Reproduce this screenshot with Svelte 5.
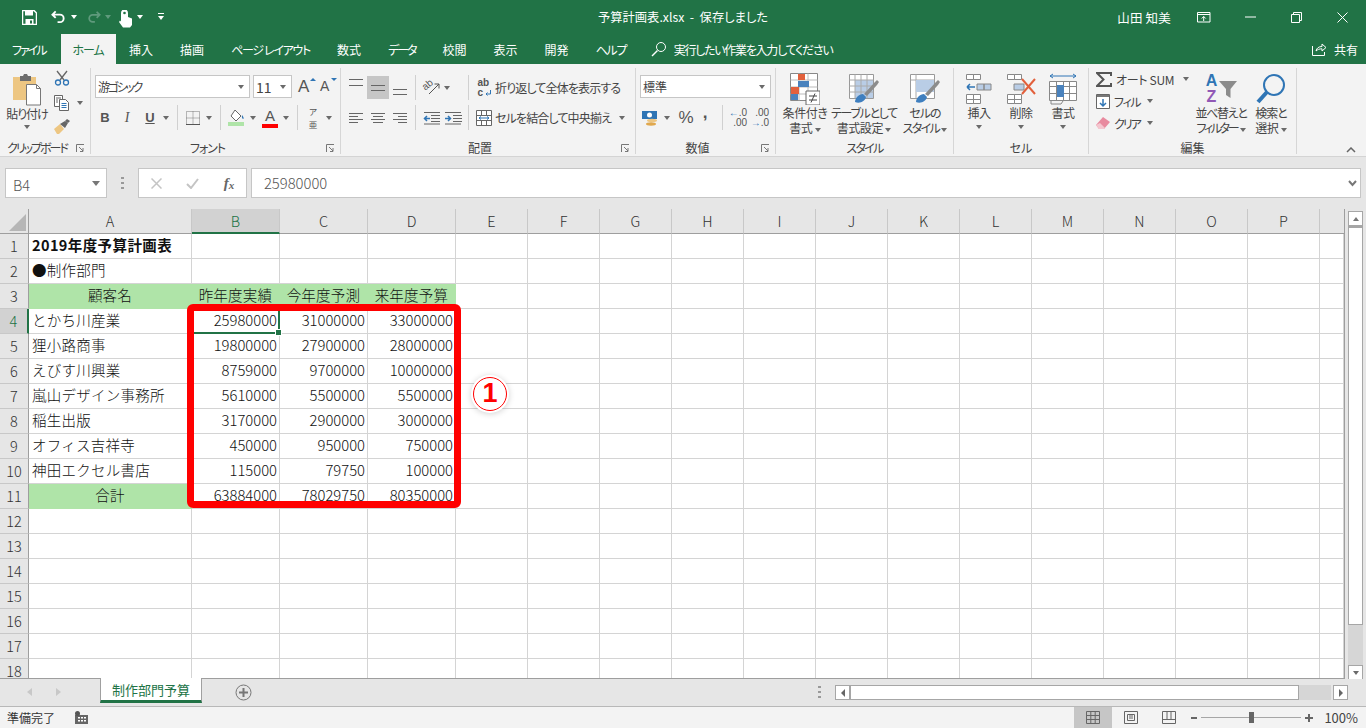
<script>
  const letters = ['A','B','C','D','E','F','G','H','I','J','K','L','M','N','O','P',''];
  const data = {
    1: ['2019年度予算計画表'],
    2: ['●制作部門'],
    3: ['顧客名','昨年度実績','今年度予測','来年度予算'],
    4: ['とかち川産業','25980000','31000000','33000000'],
    5: ['狸小路商事','19800000','27900000','28000000'],
    6: ['えびす川興業','8759000','9700000','10000000'],
    7: ['嵐山デザイン事務所','5610000','5500000','5500000'],
    8: ['稲生出版','3170000','2900000','3000000'],
    9: ['オフィス吉祥寺','450000','950000','750000'],
    10: ['神田エクセル書店','115000','79750','100000'],
    11: ['合計','63884000','78029750','80350000']
  };
  const rows = Array.from({ length: 18 }, (_, i) => i + 1);
  function cls(r, c) {
    const out = ['cell'];
    if (r === 1 && c === 0) out.push('bold');
    if ((r === 3 && c < 4) || (r === 11 && c === 0)) out.push('fill');
    if (r >= 4 && r <= 11 && c >= 1 && c <= 3) out.push('num');
    if (r === 4 && c === 1) out.push('sel');
    return out.join(' ');
  }
</script>

{#snippet ct()}<i class="ct"></i>{/snippet}
{#snippet launcher()}
  <svg class="launch" width="9" height="9" viewBox="0 0 9 9"><path d="M.5 8V.5H8M3 3l4 4M7 4v3.500H4" fill="none" stroke="#777"/></svg>
{/snippet}
{#snippet sep()}<b class="vsep"></b>{/snippet}
{#snippet lines(kind)}
  <svg class:lt={kind === 't'} width="16" height="14" viewBox="0 0 16 14" fill="none" stroke="#666">
    {#if kind === 'l'}<path d="M1 2.500h14M1 5.500h9M1 8.500h14M1 11.500h9"/>
    {:else if kind === 'c'}<path d="M1 2.500h14M3 5.500h10M1 8.500h14M3 11.500h10"/>
    {:else if kind === 'r'}<path d="M1 2.500h14M6 5.500h9M1 8.500h14M6 11.500h9"/>
    {:else if kind === 't'}<path d="M1 .5h14M1 6.500h14"/>
    {:else if kind === 'm'}<path d="M1 4.500h14M1 9.500h14"/>
    {:else}<path d="M1 8.500h14M1 13.500h14"/>{/if}
  </svg>
{/snippet}

<div class="app">
  <header class="title">
    <div class="qat">
      <svg class="q-save" width="15" height="15" viewBox="0 0 15 15"><path d="M.5.500h11.500l2.500 2.500v11.500H.5z" fill="none" stroke="#fff" stroke-width="1.500"/><path d="M3 1h8v4.500H3zM3.500 9h8v5h-8z" fill="#fff"/><path d="M8 10.500h2v3H8z" fill="#217346"/></svg>
      <svg class="q-undo" width="15" height="14" viewBox="0 0 16 14"><path d="M5 1 1.500 4.500 5 8M2 4.500h7.500a4 4 0 0 1 0 8H7" fill="none" stroke="#fff" stroke-width="2"/></svg>
      <i class="ct w q-c1"></i>
      <svg class="q-redo" width="14" height="14" viewBox="0 0 16 14"><path d="M11 1l3.500 3.500L11 8M14 4.500H6.500a4 4 0 0 0 0 8H9" fill="none" stroke="#5f9a7c" stroke-width="2"/></svg>
      <i class="ct d q-c2"></i>
      <svg class="q-touch" width="15" height="18" viewBox="0 0 15 18"><path d="M3 3a3.500 3.500 0 0 1 7 0V7l4 1.500V15l-2 2.500H5L1 12l1-1.500L3 11.500z" fill="#fff"/><circle cx="6.500" cy="3" r="1.300" fill="#217346"/></svg>
      <i class="ct w q-c3"></i>
      <svg class="q-more" width="8" height="8" viewBox="0 0 8 8"><path d="M1 .5h6" stroke="#fff"/><path d="M1 3h6L4 7z" fill="#fff"/></svg>
    </div>
    <div class="doc">予算計画表.xlsx&nbsp; -&nbsp; 保存しました</div>
    <div class="winctl">
      <span class="user">山田 知美</span>
      <svg class="w-disp" width="14" height="11" viewBox="0 0 14 11" fill="none" stroke="#fff"><path d="M.5.500h12.500v9.500H.5zM.5 2.500h12.500M6.700 9V4.500M4.700 6.500l2-2 2 2"/></svg>
      <svg class="w-min" width="11" height="2" viewBox="0 0 11 2"><path d="M0 1h11" stroke="#fff"/></svg>
      <svg class="w-res" width="11" height="11" viewBox="0 0 11 11" fill="none" stroke="#fff"><path d="M.5 2.500h8v8h-8zM2.500 2.500v-2h8v8h-2"/></svg>
      <svg class="w-close" width="11" height="11" viewBox="0 0 11 11"><path d="M.5.500l10 10M10.500.500l-10 10" stroke="#fff" fill="none"/></svg>
    </div>
  </header>

  <nav class="tabs">
    <span class="tab file">ファイル</span>
    <span class="tab on">ホーム</span>
    <span class="tab">挿入</span>
    <span class="tab">描画</span>
    <span class="tab n13">ページ レイアウト</span>
    <span class="tab">数式</span>
    <span class="tab n20">データ</span>
    <span class="tab">校閲</span>
    <span class="tab">表示</span>
    <span class="tab">開発</span>
    <span class="tab n13">ヘルプ</span>
    <span class="tell">
      <svg width="16" height="16" viewBox="0 0 16 16" fill="none" stroke="#fff"><circle cx="10" cy="6" r="4.500"/><path d="M6.500 9.500 1 15" stroke-width="1.500"/></svg>
      <span>実行したい作業を入力してください</span>
    </span>
    <span class="share">
      <svg width="15" height="14" viewBox="0 0 15 14" fill="none" stroke="#fff"><path d="M.5 4v9.500h12V10"/><path d="M4 9c.5-3 3-4.500 6-4.500V2l4 3.500-4 3.500V6.800C7.500 6.800 5.500 7.500 4 9z"/></svg>
      共有
    </span>
  </nav>

  <section class="ribbon">
    <div class="grp g-clip">
      <div class="body clip">
        <div class="paste">
          <svg width="30" height="33" viewBox="0 0 30 33"><path d="M1 4h23v23H1z" fill="#edc682"/><path d="M8 3h3l1-2h3l1 2h3v5H8z" fill="#6d6d6d"/><path d="M14.500 11.500h10l4 4v16.500h-14z" fill="#fff" stroke="#777"/><path d="M24.500 11.500v4h4" fill="none" stroke="#777"/></svg>
          <span class="lb n10">貼り付け</span>
          {@render ct()}
        </div>
        <div class="smalls">
          <svg width="16" height="16" viewBox="0 0 16 16" fill="none"><path d="M3 1l7 9M13 1 6 10" stroke="#666" stroke-width="1.300"/><circle cx="4" cy="12.500" r="2.500" stroke="#2f75b5" stroke-width="1.300"/><circle cx="12" cy="12.500" r="2.500" stroke="#2f75b5" stroke-width="1.300"/></svg>
          <div class="copy">
            <svg width="16" height="16" viewBox="0 0 16 16" fill="#fff" stroke="#666"><path d="M.5.500h8v11h-8z"/><path d="M5.500 4.500h6l3 3v8h-9z"/><path d="M7.500 8.500h5M7.500 10.500h5M7.500 12.500h5" stroke="#2f75b5"/><path d="M2 3h5M2 5h2M2 7h2" /></svg>
            {@render ct()}
          </div>
          <svg width="16" height="15" viewBox="0 0 16 15"><path d="M0 10l6-5 4 5-5 5H3z" fill="#edc682"/><path d="M6 5l5-3 3 2-3 5z" fill="#666"/><path d="M11 2l2-2 3 2-2 2z" fill="#666"/></svg>
        </div>
      </div>
      <div class="gl"><span class="n20">クリップボード</span>{@render launcher()}</div>
    </div>

    <div class="grp g-font">
      <div class="body">
        <div class="r1 fontr1">
          <div class="sel-box fontname"><span class="n22">游ゴシック</span>{@render ct()}</div>
          <div class="sel-box fontsize"><span>11</span>{@render ct()}</div>
          <span class="bigA">A<i class="up"></i></span>
          <span class="smA">A<i class="dn"></i></span>
        </div>
        <div class="r2 fontr2">
          <span class="fm b">B</span>
          <span class="fm i">I</span>
          <span class="fm u">U</span>
          {@render ct()}
          {@render sep()}
          <svg width="14" height="14" viewBox="0 0 14 14" fill="none" stroke="#777" stroke-dasharray="1 1"><path d="M.5.500h13v13H.5zM7 .5v13M.5 7h13"/><path d="M0 13.500h14" stroke-dasharray="none" stroke="#555"/></svg>
          {@render ct()}
          {@render sep()}
          <svg width="17" height="17" viewBox="0 0 17 17"><path d="M7 1l6 6-5 5-5-5z" fill="#fff" stroke="#666"/><path d="M14 6c1 1 2 3 1.500 4-1 0-2-1-1.500-4z" fill="#2f75b5"/><path d="M0 13h16v4H0z" fill="#afe4a8"/></svg>
          {@render ct()}
          <div class="colorA"><span>A</span><i></i></div>
          {@render ct()}
          {@render sep()}
          <div class="phon"><span>ア</span><span>亜</span></div>
          {@render ct()}
        </div>
      </div>
      <div class="gl"><span class="n10">フォント</span>{@render launcher()}</div>
    </div>

    <div class="grp g-align">
      <div class="body">
        <div class="r1 alignr1">
          {@render lines('t')}
          <span class="pressed">{@render lines('m')}</span>
          {@render lines('b')}
          {@render sep()}
          <div class="orient"><span>ab</span><svg width="12" height="12" viewBox="0 0 12 12" fill="none"><path d="M1 11 11 1M11 1H6.500M11 1v4.500" stroke="#555"/></svg></div>
          {@render ct()}
          <span></span>
          {@render sep()}
          <div class="wrapic"><span>ab</span><span>c</span><svg width="6" height="7" viewBox="0 0 6 7" fill="none"><path d="M5.500 0v4H1m1.500-1.500L1 4l1.500 1.500" stroke="#2f75b5"/></svg></div>
          <span class="lb t n08">折り返して全体を表示する</span>
        </div>
        <div class="r2 alignr2">
          {@render lines('l')}
          {@render lines('c')}
          {@render lines('r')}
          {@render sep()}
          <svg width="17" height="14" viewBox="0 0 17 14" fill="none"><path d="M1 1.500h16M8 4.500h9M8 7.500h9M8 10.500h9M1 13h16" stroke="#666"/><path d="M7 7.500H1M4 5 1.500 7.500 4 10" stroke="#2f75b5" stroke-width="1.500"/></svg>
          <svg width="17" height="14" viewBox="0 0 17 14" fill="none"><path d="M0 1.500h16M8 4.500h9M8 7.500h9M8 10.500h9M0 13h16" stroke="#666"/><path d="M0 7.500h6M3 5l2.500 2.500L3 10" stroke="#2f75b5" stroke-width="1.500"/></svg>
          {@render sep()}
          <svg width="16" height="16" viewBox="0 0 16 16" fill="#fff" stroke="#666"><path d="M.5.500h15v15H.5zM.5 5.500h15M.5 10.500h15M5.500.5v5M10.500.5v5M5.500 10.500v5M10.500 10.500v5"/><path d="M3 8h10M3 8l2-1.500M3 8l2 1.500M13 8l-2-1.500M13 8l-2 1.500" stroke="#2f75b5" fill="none"/></svg>
          <span class="lb t n08">セルを結合して中央揃え</span>
          {@render ct()}
        </div>
      </div>
      <div class="gl"><span>配置</span>{@render launcher()}</div>
    </div>

    <div class="grp g-num">
      <div class="body">
        <div class="r1 numr1"><div class="sel-box numfmt"><span>標準</span>{@render ct()}</div></div>
        <div class="r2 numr2">
          <svg width="16" height="16" viewBox="0 0 16 16"><path d="M0 1h15v8H0z" fill="#2f75b5"/><circle cx="7.500" cy="5" r="2.500" fill="#fff"/><ellipse cx="10" cy="10.500" rx="5" ry="1.700" fill="#edc682"/><ellipse cx="9" cy="14" rx="5" ry="1.700" fill="#e0a84e"/></svg>
          {@render ct()}
          <span class="pct">%</span>
          <span class="comma">,</span>
          <span></span>
          {@render sep()}
          <div class="dec"><span><em>←</em>.0</span><span>.00</span></div>
          <div class="dec"><span>.00</span><span><em>→</em>.0</span></div>
        </div>
      </div>
      <div class="gl"><span>数値</span>{@render launcher()}</div>
    </div>

    <div class="grp g-style">
      <div class="body bigs">
        <div class="big w54">
          <svg width="30" height="32" viewBox="0 0 30 32"><path d="M.5.500h27v27H.5z" fill="#fff" stroke="#888"/><path d="M.5 7h27M.5 14h27M.5 21h27M9 .5v27M18 .5v27" stroke="#bbb"/><path d="M8 1h7v6H8zM1 14h8v7H1z" fill="#e2603c"/><path d="M8 8h11v6H8zM8 21H1v6h7z" fill="#4a82bd"/><path d="M16 18h14v14H16z" fill="#fff" stroke="#666"/><path d="M19 23h8M19 27h8M25 20.500l-4 9" stroke="#444" fill="none"/></svg>
          <span class="lb">条件付き</span><span class="lb">書式 {@render ct()}</span>
        </div>
        <div class="big w64">
          <svg width="30" height="30" viewBox="0 0 30 30"><path d="M.5.500h24v24H.5z" fill="#fff" stroke="#999"/><path d="M6 6h18v18H6z" fill="#b9cde6"/><path d="M.5 6h24M.5 12h24M.5 18h24M6 .5v24M12 .5v24M18 .5v24" stroke="#aaa"/><path d="M15 20 25 9l3-3 2 2-2 3-10 11z" fill="#8c8c8c"/><path d="M6 28c0-4 4-8 8-8l3 3c-1 4-6 7-11 5z" fill="#3f7fbf"/></svg>
          <span class="lb n13">テーブルとして</span><span class="lb">書式設定 {@render ct()}</span>
        </div>
        <div class="big w58">
          <svg width="30" height="30" viewBox="0 0 30 30"><path d="M.5.500h24v24H.5z" fill="#fff" stroke="#999"/><path d="M.5 6h24M6 .5v24" stroke="#aaa"/><path d="M6 6h18v12H6z" fill="#b9cde6"/><path d="M15 20 25 9l3-3 2 2-2 3-10 11z" fill="#8c8c8c"/><path d="M6 28c0-4 4-8 8-8l3 3c-1 4-6 7-11 5z" fill="#3f7fbf"/></svg>
          <span class="lb n10">セルの</span><span class="lb"><span class="n17">スタイル</span> {@render ct()}</span>
        </div>
      </div>
      <div class="gl plain"><span class="n17">スタイル</span></div>
    </div>

    <div class="grp g-cell">
      <div class="body bigs">
        <div class="big w42">
          <svg width="26" height="30" viewBox="0 0 26 30" fill="#fff" stroke="#888"><path d="M.5.500h7v5h-7zM7.500.500h7v5h-7zM.5 20.500h7v5h-7zM7.500 20.500h7v5h-7zM.5 25.500h7v4h-7zM7.500 25.500h7v4h-7z"/><path d="M11 10h7v6h-7zM18 10h7v6h-7z" fill="#b9cde6"/><path d="M9 13H1M1 13l3-3M1 13l3 3" stroke="#2f75b5" stroke-width="1.500" fill="none"/></svg>
          <span class="lb">挿入</span>{@render ct()}
        </div>
        <div class="big w42">
          <svg width="29" height="30" viewBox="0 0 29 30" fill="#fff" stroke="#888"><path d="M.5.500h7v5h-7zM7.500.500h7v5h-7zM.5 20.500h7v5h-7zM7.500 20.500h7v5h-7zM.5 25.500h7v4h-7zM7.500 25.500h7v4h-7z"/><path d="M7 10h10v6H7z" fill="#b9cde6"/><path d="M15 5l13 15M28 5 15 20" stroke="#e2603c" stroke-width="2"/></svg>
          <span class="lb">削除</span>{@render ct()}
        </div>
        <div class="big w42">
          <svg width="28" height="32" viewBox="0 0 28 32" fill="#fff" stroke="#888"><path d="M1 3h26M1 3l3-2M1 3l3 2M27 3l-3-2M27 3l-3 2" stroke="#2f75b5" fill="none"/><path d="M.5 8.500h27v19H.5zM.5 13.500h27M.5 20.500h27M7.500 8.500v19M14.500 8.500v19M20.500 8.500v19"/><path d="M8 12h7v12H8z" fill="#4a82bd" stroke="none"/><path d="M2 28v3h10l2-3" fill="none"/></svg>
          <span class="lb">書式</span>{@render ct()}
        </div>
      </div>
      <div class="gl plain"><span>セル</span></div>
    </div>

    <div class="grp g-edit">
      <div class="body bigs">
        <div class="editcol">
          <div class="er">
            <svg width="16" height="15" viewBox="0 0 16 15"><path d="M15 4V1H1l6.500 6.500L1 14h14v-3" fill="none" stroke="#555" stroke-width="2"/></svg>
            <span class="lb n03">オート SUM</span>{@render ct()}
          </div>
          <div class="er">
            <svg width="14" height="15" viewBox="0 0 14 15"><path d="M.5.500h13v14H.5z" fill="#fff" stroke="#666"/><path d="M1 1h12v2H1z" fill="#777"/><path d="M7 5v7M4 9l3 3 3-3" fill="none" stroke="#2f75b5" stroke-width="1.500"/></svg>
            <span class="lb n13">フィル</span>{@render ct()}
          </div>
          <div class="er">
            <svg width="14" height="14" viewBox="0 0 14 14"><path d="M0 9l7-8 7 5-6 7H3z" fill="#e88a9f"/><path d="M0 9l3 4h5l1-1-5-5z" fill="#f4c6cf"/></svg>
            <span class="lb n20">クリア</span>{@render ct()}
          </div>
        </div>
        <div class="big w54">
          <div class="sorticon">
            <div class="az"><span class="a">A</span><span class="z">Z</span></div>
            <svg width="18" height="18" viewBox="0 0 18 18"><path d="M0 1h18l-6.500 8v9L7 15V9z" fill="#8c8c8c"/></svg>
          </div>
          <span class="lb n13">並べ替えと</span><span class="lb"><span class="n22">フィルター</span> {@render ct()}</span>
        </div>
        <div class="big w46">
          <svg width="30" height="32" viewBox="0 0 30 32" fill="none"><circle cx="18" cy="12" r="10" stroke="#2f75b5" stroke-width="2"/><path d="M11 19 2 29" stroke="#2f75b5" stroke-width="4"/></svg>
          <span class="lb n10">検索と</span><span class="lb">選択 {@render ct()}</span>
        </div>
      </div>
      <div class="gl plain"><span>編集</span></div>
    </div>

    <svg class="collapse" width="10" height="6" viewBox="0 0 10 6"><path d="M1 5l4-4 4 4" fill="none" stroke="#666" stroke-width="1.500"/></svg>
  </section>

  <section class="fbar">
    <div class="namebox"><span class="nb">B4</span><i class="ct lg"></i></div>
    <svg class="dots" width="3" height="12" viewBox="0 0 3 12" fill="#999"><path d="M0 0h3v2H0zM0 5h3v2H0zM0 10h3v2H0z"/></svg>
    <div class="fbtns">
      <svg width="11" height="11" viewBox="0 0 11 11"><path d="M.5.500l10 10M10.500.500l-10 10" stroke="#c4c4c4" stroke-width="1.500"/></svg>
      <svg width="13" height="11" viewBox="0 0 13 11"><path d="M1 6l4 4 7-9" fill="none" stroke="#c4c4c4" stroke-width="2"/></svg>
      <span class="fx">f<sub>x</sub></span>
    </div>
    <div class="finput"><span>25980000</span>
      <svg width="9" height="7" viewBox="0 0 9 7"><path d="M1 1l3.500 4L8 1" fill="none" stroke="#777" stroke-width="2"/></svg>
    </div>
  </section>

  <section class="work">
    <div class="sheet">
      <div class="grid">
        <div class="corner"><svg width="17" height="17" viewBox="0 0 17 17"><path d="M17 0v17H0z" fill="#b6b6b6"/></svg></div>
        {#each letters as l, i}
          <div class="chead" class:on={i === 1}>{l}</div>
        {/each}
        {#each rows as r}
          <div class="rhead" class:on={r === 4}>{r}</div>
          {#each letters as _, c}
            <div class={cls(r, c)}>{data[r]?.[c] ?? ''}</div>
          {/each}
        {/each}
      </div>
      <div class="redbox"></div>
      <div class="badge">1</div>
    </div>
    <div class="vscroll">
      <div class="vbtn"><i class="ct up-t"></i></div>
      <div class="vthumb"></div>
      <div class="vtrack"></div>
      <div class="vbtn"><i class="ct"></i></div>
    </div>
  </section>

  <section class="tabbar">
    <i class="nav l"></i><i class="nav r"></i>
    <div class="sheettab">制作部門予算</div>
    <svg class="plus" width="17" height="17" viewBox="0 0 17 17" fill="none" stroke="#777"><circle cx="8.500" cy="8.500" r="7.500"/><path d="M8.500 4v9M4 8.500h9" stroke-width="2"/></svg>
    <svg class="dots h" width="3" height="12" viewBox="0 0 3 12" fill="#999"><path d="M0 0h3v2H0zM0 5h3v2H0zM0 10h3v2H0z"/></svg>
    <div class="hscroll">
      <div class="hbtn"><i class="nav2 l"></i></div>
      <div class="hthumb"></div>
      <div class="htrack"></div>
      <div class="hbtn"><i class="nav2 r"></i></div>
    </div>
  </section>

  <footer class="status">
    <span class="ready">準備完了</span>
    <svg class="macro" width="13" height="13" viewBox="0 0 13 13"><path d="M3 4h10v9H0V4z" fill="#666"/><circle cx="2.500" cy="2.500" r="2.500" fill="#555"/><path d="M3 6h2v1.500H3zM6 6h2v1.500H6zM9 6h2v1.500H9zM3 9h2v1.500H3zM6 9h2v1.500H6zM9 9h2v1.500H9z" fill="#fff"/></svg>
    <div class="sright">
      <div class="vw active"><svg width="14" height="13" viewBox="0 0 14 13" fill="none" stroke="#666"><path d="M.5.500h13v12H.5zM.5 4.500h13M.5 8.500h13M4.800.5v12M9.200.5v12"/></svg></div>
      <div class="vw"><svg width="14" height="13" viewBox="0 0 14 13" fill="none" stroke="#666"><path d="M.5.500h13v12H.5zM3.500 3.500h7v6h-7zM5 5h4M5 7h4"/></svg></div>
      <div class="vw"><svg width="14" height="13" viewBox="0 0 14 13" fill="none" stroke="#666"><path d="M.5 .5h13v12H.5zM.5 8.500h13M5 .5v8M9 .5v8"/></svg></div>
      <div class="zoom">
        <b class="zm"></b>
        <div class="zline"><i></i></div>
        <b class="zp"></b>
      </div>
      <span class="pc">100%</span>
    </div>
  </footer>
</div>

<style>
  :global(body) { margin: 0; overflow: hidden; background: #fff; }
  .app { width: 1366px; height: 728px; display: flex; flex-direction: column; overflow: hidden; font-family: "Noto Sans CJK JP", "Noto Sans", sans-serif; font-size: 12px; color: #444; font-feature-settings: "palt"; }

  .n03 { letter-spacing: -.3px; }
  .n08 { letter-spacing: -.85px; }
  .n10 { letter-spacing: -1px; }
  .n13 { letter-spacing: -1.300px; }
  .n17 { letter-spacing: -1.700px; }
  .n20 { letter-spacing: -2px; }
  .n22 { letter-spacing: -2.300px; }

  .ct { display: inline-block; width: 0; height: 0; border: 3.500px solid transparent; border-top: 4px solid #6a6a6a; border-bottom: 0; vertical-align: middle; flex: none; }
  .ct.w { border-top-color: #fff; }
  .ct.d { border-top-color: #5f9a7c; }
  .ct.lg { border-width: 4.500px; border-top-width: 5px; border-bottom-width: 0; border-top-color: #777; }
  .ct.up-t { border-top: 0; border-bottom: 4px solid #777; }

  .title { height: 34px; flex: none; background: #217346; color: #fff; display: flex; align-items: center; position: relative; }
  .qat { display: flex; align-items: center; padding-left: 22px; }
  .q-undo { margin-left: 14px; }
  .q-c1 { margin-left: 5px; }
  .q-redo { margin-left: 10px; }
  .q-c2 { margin-left: 4px; }
  .q-touch { margin-left: 7px; margin-top: 3px; }
  .q-c3 { margin-left: 4px; }
  .q-more { margin-left: 14px; }
  .doc { position: absolute; left: 0; right: 0; text-align: center; pointer-events: none; font-size: 12.300px; }
  .winctl { margin-left: auto; display: flex; align-items: center; padding-right: 18px; }
  .user { font-size: 12.500px; letter-spacing: .2px; }
  .w-disp { margin-left: 26px; }
  .w-min { margin-left: 34px; }
  .w-res { margin-left: 35px; }
  .w-close { margin-left: 35px; }

  .tabs { height: 30px; flex: none; background: #217346; color: #fff; display: flex; align-items: stretch; }
  .tab { display: flex; align-items: center; padding: 0 13.500px; white-space: nowrap; }
  .tab.file { padding: 0 15px 0 12px; letter-spacing: -2px; }
  .tab.on { background: #f3f3f3; color: #217346; width: 55px; box-sizing: border-box; justify-content: center; padding: 0; letter-spacing: -1px; }
  .tell { display: flex; align-items: center; gap: 7px; margin-left: 11px; }
  .tell span { letter-spacing: -1.250px; }
  .share { margin-left: auto; display: flex; align-items: center; gap: 7px; padding-right: 8px; }

  .ribbon { background: #f3f3f3; border-bottom: 1px solid #d4d4d4; display: flex; position: relative; padding-top: 4px; height: 88px; flex: none; }
  .grp { display: flex; flex-direction: column; height: 86px; border-right: 1px solid #d6d6d6; box-sizing: border-box; flex: none; }
  .g-clip { width: 91px; } .g-font { width: 250px; } .g-align { width: 295px; } .g-num { width: 140px; }
  .g-style { width: 178px; } .g-cell { width: 135px; } .g-edit { width: 208px; }
  .body { height: 72px; flex: none; box-sizing: border-box; }
  .gl { height: 16px; display: flex; align-items: center; flex: none; }
  .gl span { flex: 1; text-align: center; line-height: 16px; }
  .launch { margin: 0 5px 0 2px; flex: none; }

  .r1 { height: 23px; margin-top: 7px; }
  .r2 { height: 25px; margin-top: 7px; }
  .r1, .r2 { display: grid; align-items: center; justify-items: center; }
  .lb { white-space: nowrap; line-height: 15px; letter-spacing: -.4px; }
  .lb.n03 { letter-spacing: -.3px; }
  .lb.n08 { letter-spacing: -.85px; }
  .lb.n10 { letter-spacing: -1px; }
  .lb.n13 { letter-spacing: -1.300px; }
  .lb.n20 { letter-spacing: -2px; }
  .lb.t { justify-self: start; font-size: 12px; }
  .vsep { display: block; width: 1px; height: 25px; background: #d0d0d0; }
  .lt { margin-bottom: 4px; }

  .sel-box { height: 23px; box-sizing: border-box; background: #fff; border: 1px solid #c6c6c6; display: flex; align-items: center; justify-content: space-between; padding: 0 5px 0 2px; }
  .clip { display: flex; }
  .paste { width: 54px; display: flex; flex-direction: column; align-items: center; padding-top: 5px; }
  .paste .lb { margin-top: 0; }
  .paste .ct { margin-top: 4px; }
  .smalls { display: flex; flex-direction: column; gap: 8px; padding-top: 2px; }
  .copy { display: flex; align-items: center; gap: 7px; margin-top: 1px; }

  .fontr1 { display: flex; padding-left: 4px; }
  .fontname { width: 155px; margin-right: 3px; }
  .fontsize { width: 39px; font-size: 14px; }
  .bigA { position: relative; font-size: 17px; margin-left: 6px; width: 20px; font-family: "Liberation Sans", sans-serif; color: #555; line-height: 23px; }
  .smA { position: relative; font-size: 14px; margin-left: 2px; width: 14px; font-family: "Liberation Sans", sans-serif; color: #555; line-height: 23px; }
  .up, .dn { position: absolute; top: 3px; width: 0; height: 0; border: 3px solid transparent; }
  .up { border-top: 0; border-bottom: 3px solid #2f75b5; right: 2px; }
  .dn { border-bottom: 0; border-top: 3px solid #2f75b5; right: -3px; }

  .fontr2 { padding-left: 4px; grid-template-columns: 20px 24px 22px 10px 12px 19px 14px 8px 24px 10px 24px 8px 14px 18px 14px; }
  .fm { font-family: "Liberation Sans", sans-serif; font-size: 13px; color: #555; }
  .fm.b { font-weight: 700; }
  .fm.i { font-family: "Liberation Serif", serif; font-style: italic; font-size: 14px; }
  .fm.u { text-decoration: underline; font-weight: 700; }
  .colorA { display: flex; flex-direction: column; align-items: center; font-family: "Liberation Sans", sans-serif; font-size: 15px; line-height: 16px; color: #555; }
  .colorA i { display: block; width: 16px; height: 4px; background: #f00; }
  .phon { display: flex; flex-direction: column; font-size: 8.500px; line-height: 12.500px; align-items: center; color: #555; }

  .alignr1 { padding-left: 4px; grid-template-columns: 22px 22px 22px 8px 24px 8px 11px 12px 20px 1fr; }
  .alignr2 { padding-left: 4px; grid-template-columns: 22px 22px 22px 8px 24px 20px 10px 22px 120px 14px; }
  .pressed { width: 22px; height: 23px; background: #c6c6c6; display: flex; align-items: center; justify-content: center; }
  .alignr1 > .lb { padding-left: 1px; }
  .orient { position: relative; width: 18px; height: 16px; }
  .orient span { position: absolute; left: 0; top: -1px; font: 10px/12px "Liberation Sans", sans-serif; color: #555; transform: rotate(-40deg); }
  .orient svg { position: absolute; left: 6px; top: 3px; }
  .wrapic { position: relative; width: 13px; height: 20px; font: 700 10px/10px "Liberation Sans", sans-serif; color: #555; display: flex; flex-direction: column; }
  .wrapic svg { position: absolute; right: 0; bottom: 1px; }

  .numr1 { display: flex; padding-left: 4px; }
  .numfmt { width: 131px; }
  .numr2 { padding-left: 4px; grid-template-columns: 20px 14px 24px 14px 6px 8px 24px 20px; }
  .pct { font-family: "Liberation Sans", sans-serif; font-size: 17px; color: #555; }
  .comma { font-family: "Liberation Sans", sans-serif; font-size: 17px; font-weight: 700; color: #555; margin-top: -10px; }
  .dec { display: flex; flex-direction: column; align-items: flex-end; font-family: "Liberation Sans", sans-serif; font-size: 10px; line-height: 10px; color: #555; }
  .dec em { font-style: normal; color: #2f75b5; font-weight: 700; }

  .bigs { display: flex; }
  .big { display: flex; flex-direction: column; align-items: center; padding-top: 5px; flex: none; box-sizing: border-box; }
  .big > svg { height: 32px; flex: none; margin-bottom: 0; }
  .big > .ct { margin-top: 5px; }
  .sorticon { height: 32px; width: 32px; display: flex; align-items: center; gap: 1px; flex: none; }
  .az { display: flex; flex-direction: column; font: 700 16px/16px "Liberation Sans", sans-serif; width: 13px; align-items: center; flex: none; }
  .az .a { color: #2f75b5; }
  .az .z { color: #9158b5; }
  .w42 { width: 42px; } .w46 { width: 46px; } .w54 { width: 54px; } .w58 { width: 58px; } .w64 { width: 64px; }
  .g-style .bigs { padding-left: 2px; }
  .g-cell .bigs { padding-left: 4px; }
  .g-edit .bigs { padding-left: 5px; }
  .editcol { width: 100px; display: flex; flex-direction: column; gap: 4px; padding-top: 2px; flex: none; }
  .er { display: flex; align-items: center; height: 18px; gap: 4px; }
  .er svg { margin-left: 2px; }
  .er .ct { margin-left: 3px; }
  .er:first-child .ct { margin-left: 5px; }

  .collapse { position: absolute; right: 10px; top: 83px; }

  .fbar { height: 52px; flex: none; box-sizing: border-box; background: #e6e6e6; padding: 11px 5px; display: flex; align-items: stretch; }
  .namebox { width: 102px; box-sizing: border-box; border: 1px solid #c6c6c6; background: #fff; display: flex; align-items: center; justify-content: space-between; padding: 0 6px 0 7px; font-size: 14.500px; font-weight: 300; color: #555; }
  .nb { padding-top: 3px; }
  .dots { align-self: center; margin-left: 14px; }
  .fbtns { width: 109px; margin-left: 14px; box-sizing: border-box; border: 1px solid #c6c6c6; background: #fff; display: grid; grid-template-columns: 36px 36px 36px; align-items: center; justify-items: center; }
  .fx { font-family: "Liberation Serif", serif; font-style: italic; font-weight: 700; font-size: 15px; color: #666; line-height: 18px; }
  .fx sub { font-size: 11px; line-height: 0; vertical-align: -1px; }
  .finput { width: 1111px; margin-left: 4px; box-sizing: border-box; border: 1px solid #c6c6c6; background: #fff; display: flex; align-items: center; justify-content: space-between; padding: 0 3px 0 12px; font-size: 14.800px; font-weight: 300; color: #555; font-feature-settings: normal; }
  .finput span { margin-top: -2px; }

  .work { height: 470px; flex: none; display: flex; background: #e6e6e6; }
  .sheet { width: 1345px; height: 470px; box-sizing: border-box; border-right: 1px solid #9e9e9e; border-bottom: 1px solid #9e9e9e; overflow: hidden; position: relative; flex: none; }
  .grid { display: grid; grid-template-columns: 29px 163px repeat(3, 88px) repeat(12, 72px) 24px; grid-template-rows: 25px; grid-auto-rows: 25px; background: #fff; font-feature-settings: normal; }
  .corner { background: #e6e6e6; border-right: 1px solid #9e9e9e; border-bottom: 1px solid #9e9e9e; box-sizing: border-box; display: flex; align-items: flex-end; justify-content: flex-end; padding: 0 2px 2px 0; }
  .chead, .rhead { box-sizing: border-box; background: #e6e6e6; display: flex; align-items: center; justify-content: center; font-size: 14.500px; font-weight: 300; color: #333; padding-bottom: 2px; }
  .chead { border-right: 1px solid #c8c8c8; border-bottom: 1px solid #9e9e9e; }
  .chead:nth-child(18) { border-right: 0; }
  .chead.on { background: #d2d2d2; color: #217346; border-bottom: 2px solid #217346; padding-bottom: 1px; }
  .rhead { border-right: 1px solid #9e9e9e; border-bottom: 1px solid #c8c8c8; }
  .rhead.on { background: #d2d2d2; color: #217346; border-right: 2px solid #217346; }
  .cell { box-sizing: border-box; border-right: 1px solid #d4d4d4; border-bottom: 1px solid #d4d4d4; font-size: 14.500px; font-weight: 300; line-height: 22px; padding: 0 2px 0 3px; white-space: nowrap; overflow: hidden; color: #111; letter-spacing: .25px; }
  .cell.bold { font-weight: 700; overflow: visible; letter-spacing: .4px; }
  .cell.fill { background: #afe4a8; border-color: #afe4a8; text-align: center; padding: 0; }
  .cell.num { text-align: right; letter-spacing: 0; font-size: 14.800px; }
  .cell.sel { border-right: 2px solid #217346; border-bottom: 2px solid #217346; position: relative; overflow: visible; padding-right: 1px; }
  .cell.sel::after { content: ""; position: absolute; right: -4px; bottom: -4px; width: 5px; height: 5px; background: #217346; border: 1px solid #fff; }

  .redbox { position: absolute; left: 187px; top: 95px; width: 274px; height: 204px; box-sizing: border-box; border: 7px solid #f00; border-radius: 6px; }
  .badge { position: absolute; left: 473px; top: 168px; width: 34px; height: 34px; box-sizing: border-box; border: 1.500px solid #f00; border-radius: 50%; background: #fff; color: #f00; font: 700 27px/31px "Liberation Sans", sans-serif; text-align: center; box-shadow: 0 0 0 2px #fff, 0 1px 6px 2px rgba(0,0,0,.18); }

  .vscroll { width: 21px; height: 470px; box-sizing: border-box; padding: 2px 3px 0; display: flex; flex-direction: column; }
  .vbtn { height: 15px; flex: none; box-sizing: border-box; background: #fff; border: 1px solid #a6a6a6; display: flex; align-items: center; justify-content: center; }
  .vthumb { height: 399px; flex: none; box-sizing: border-box; background: #fff; border: 1px solid #a6a6a6; border-top-width: 2px; }
  .vtrack { height: 40px; flex: none; background: #d6d6d6; }

  .tabbar { height: 28px; flex: none; box-sizing: border-box; background: #e6e6e6; border-bottom: 1px solid #b8b8b8; display: flex; align-items: flex-start; position: relative; }
  .nav { width: 0; height: 0; border: 4px solid transparent; margin-top: 9px; flex: none; }
  .nav.l { border-right: 5px solid #c8c8c8; border-left: 0; margin-left: 27px; }
  .nav.r { border-left: 5px solid #c8c8c8; border-right: 0; margin-left: 24px; }
  .sheettab { width: 102px; height: 25px; margin-top: -1px; margin-left: 39px; box-sizing: border-box; background: #fff; border-left: 1px solid #a0a0a0; border-right: 1px solid #a0a0a0; border-bottom: 3px solid #217346; color: #217346; text-align: center; line-height: 23px; font-size: 13px; font-feature-settings: normal; }
  .plus { margin-left: 33px; margin-top: 5px; flex: none; }
  .dots.h { margin-left: auto; margin-top: 7px; align-self: flex-start; }
  .hscroll { display: flex; margin: 6px 18px 0 14px; height: 15px; }
  .hbtn { width: 15px; height: 15px; box-sizing: border-box; background: #fff; border: 1px solid #a6a6a6; display: flex; align-items: center; justify-content: center; flex: none; }
  .hthumb { width: 449px; box-sizing: border-box; background: #fff; border: 1px solid #a6a6a6; }
  .htrack { width: 32px; background: #d6d6d6; margin-right: 2px; }
  .nav2 { width: 0; height: 0; border: 4px solid transparent; }
  .nav2.l { border-right: 4px solid #666; border-left: 0; }
  .nav2.r { border-left: 4px solid #666; border-right: 0; }

  .status { height: 21px; flex: none; background: #f3f3f3; display: flex; align-items: center; font-feature-settings: normal; }
  .ready { padding-left: 7px; font-size: 12px; color: #333; }
  .macro { margin-left: 20px; }
  .sright { margin-left: auto; display: flex; align-items: center; height: 100%; padding-right: 8px; }
  .vw { width: 38px; height: 21px; display: flex; align-items: center; justify-content: center; }
  .vw.active { background: #c6c6c6; }
  .zoom { display: flex; align-items: center; margin-left: 3px; }
  .zm { width: 6px; height: 2px; background: #666; display: block; }
  .zline { width: 100px; height: 1px; background: #a6a6a6; margin: 0 4px; position: relative; }
  .zline i { position: absolute; left: 48px; top: -5px; width: 5px; height: 11px; background: #666; }
  .zp { width: 8px; height: 8px; display: block; background: linear-gradient(#666,#666) center/8px 2px no-repeat, linear-gradient(#666,#666) center/2px 8px no-repeat; }
  .pc { margin-left: 11px; font-size: 13px; color: #444; }
</style>
